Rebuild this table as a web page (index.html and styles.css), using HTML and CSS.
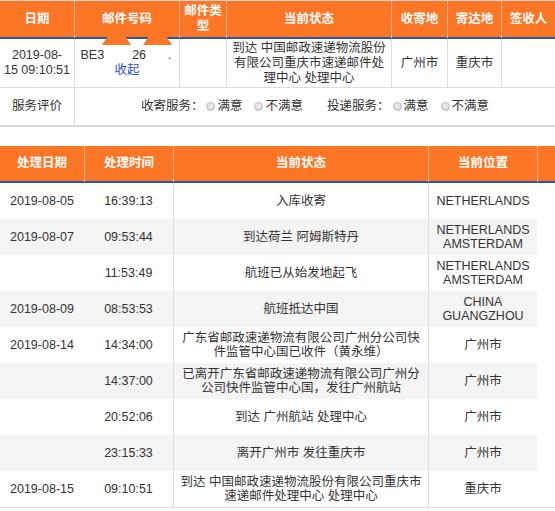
FILE: index.html
```html
<!DOCTYPE html>
<html lang="zh-CN">
<head>
<meta charset="utf-8">
<title>邮件跟踪</title>
<link rel="stylesheet" href="styles.css">
</head>
<body>
<div class="page">
  <div class="t1">
    <div class="row head">
      <div class="h first">日期</div>
      <div class="h">邮件号码</div>
      <div class="h">邮件类<br>型</div>
      <div class="h">当前状态</div>
      <div class="h">收寄地</div>
      <div class="h">寄达地</div>
      <div class="h">签收人</div>
    </div>
    <div class="row data">
      <div class="c first">2019-08-<br>15 09:10:51</div>
      <div class="c trk">
        <div class="num"><span>BE3</span><span class="n2">26</span><span class="n3">.</span></div>
        <a class="fold">收起</a>
      </div>
      <div class="c"></div>
      <div class="c">到达 中国邮政速递物流股份<br>有限公司重庆市速递邮件处<br>理中心 处理中心</div>
      <div class="c">广州市</div>
      <div class="c">重庆市</div>
      <div class="c"></div>
    </div>
    <div class="row svc-row">
      <div class="c first">服务评价</div>
      <div class="c svc">
        <span>收寄服务：</span><span class="radio"></span><span>满意</span><span class="radio gap"></span><span>不满意</span>
        <span class="sep">投递服务：</span><span class="radio"></span><span>满意</span><span class="radio gap"></span><span>不满意</span>
      </div>
    </div>
    <span class="tab tab1"></span>
    <span class="tab tab2"></span>
  </div>

  <div class="t2">
    <div class="row2 head2">
      <div class="h first">处理日期</div>
      <div class="h">处理时间</div>
      <div class="h">当前状态</div>
      <div class="h">当前位置</div>
      <div class="h"></div>
    </div>
    <div class="rows">
      <div class="row2"><div class="d">2019-08-05</div><div class="d">16:39:13</div><div class="d st">入库收寄</div><div class="d loc">NETHERLANDS</div><div class="d blank"></div></div>
      <div class="row2"><div class="d">2019-08-07</div><div class="d">09:53:44</div><div class="d st">到达荷兰 阿姆斯特丹</div><div class="d loc">NETHERLANDS<br>AMSTERDAM</div><div class="d blank"></div></div>
      <div class="row2"><div class="d"></div><div class="d">11:53:49</div><div class="d st">航班已从始发地起飞</div><div class="d loc">NETHERLANDS<br>AMSTERDAM</div><div class="d blank"></div></div>
      <div class="row2"><div class="d">2019-08-09</div><div class="d">08:53:53</div><div class="d st">航班抵达中国</div><div class="d loc">CHINA<br>GUANGZHOU</div><div class="d blank"></div></div>
      <div class="row2"><div class="d">2019-08-14</div><div class="d">14:34:00</div><div class="d st">广东省邮政速递物流有限公司广州分公司快<br>件监管中心国已收件（黄永维）</div><div class="d loc">广州市</div><div class="d blank"></div></div>
      <div class="row2"><div class="d"></div><div class="d">14:37:00</div><div class="d st">已离开广东省邮政速递物流有限公司广州分<br>公司快件监管中心国，发往广州航站</div><div class="d loc">广州市</div><div class="d blank"></div></div>
      <div class="row2"><div class="d"></div><div class="d">20:52:06</div><div class="d st">到达 广州航站 处理中心</div><div class="d loc">广州市</div><div class="d blank"></div></div>
      <div class="row2"><div class="d"></div><div class="d">23:15:33</div><div class="d st">离开广州市 发往重庆市</div><div class="d loc">广州市</div><div class="d blank"></div></div>
      <div class="row2"><div class="d">2019-08-15</div><div class="d">09:10:51</div><div class="d st">到达 中国邮政速递物流股份有限公司重庆市<br>速递邮件处理中心 处理中心</div><div class="d loc">重庆市</div><div class="d blank"></div></div>
    </div>
  </div>
</div>
</body>
</html>
```

FILE: styles.css
```css
* { box-sizing: border-box; }
html, body {
  margin: 0;
  padding: 0;
  overflow: hidden;
  background: #fff;
}
body {
  font-family: "Liberation Sans", "Noto Sans CJK SC", sans-serif;
  font-size: 12.5px;
  color: #333;
}

/* ---------- top table ---------- */
.t1 {
  position: relative;
  width: 555px;
  border-top: 1px solid #cfcfcf;
}
.t1 .row {
  display: grid;
  grid-template-columns: 74px 105px 47px 165px 56px 54px 54px;
}
.h {
  background: #fd7625;
  color: #fff;
  font-weight: bold;
  display: flex;
  align-items: center;
  justify-content: center;
  text-align: center;
  line-height: 15px;
  border-left: 1px solid #f9b68c;
}
.h.first { border-left: none; }
.t1 .head { height: 38px; }
.t1 .head .h { border-bottom: 2px solid #245ba0; }

.c {
  display: flex;
  align-items: center;
  justify-content: center;
  text-align: center;
  line-height: 15px;
  padding: 0 2px;
  border-left: 1px solid #dcdcdc;
  border-bottom: 1px solid #dcdcdc;
}
.c.first { border-left: none; }
.t1 .data { height: 49px; }

.trk {
  flex-direction: column;
  padding: 0;
}
.num {
  width: 93px;
  display: flex;
  text-align: left;
  white-space: nowrap;
}
.n2 { margin-left: 28px; }
.n3 { margin-left: 22px; }
.fold {
  color: #2b4fcf;
  cursor: pointer;
}

.t1 .svc-row {
  grid-template-columns: 74px 481px;
  height: 39px;
}
.t1 .svc-row .c { border-bottom: 2px solid #d8d8d8; }
.svc { white-space: nowrap; }
.radio {
  display: inline-block;
  width: 9px;
  height: 9px;
  margin: 0 2px 0 3px;
  border-radius: 50%;
  border: 1px solid #bcbcbc;
  background: radial-gradient(circle at 50% 40%, #f2f2f2, #cdcdcd);
}
.radio.gap { margin-left: 12px; }
.sep { margin-left: 24px; }

.tab {
  position: absolute;
  top: 36px;
  width: 29px;
  height: 8px;
  background: #fd7625;
  clip-path: polygon(18% 0, 82% 0, 100% 100%, 0 100%);
}
.tab1 { left: 102px; }
.tab2 { left: 143px; }

/* ---------- bottom table ---------- */
.t2 {
  width: 555px;
  margin-top: 19px;
}
.row2 {
  display: grid;
  grid-template-columns: 84px 89px 255px 109px 18px;
  height: 36px;
}
.head2 { height: 37px; }
.head2 .h { border-bottom: 2px solid #245ba0; }

.d {
  display: flex;
  align-items: center;
  justify-content: center;
  text-align: center;
  line-height: 14px;
  padding: 0 4px;
  white-space: nowrap;
}
.rows .row2:nth-child(even) .d { background: #f4f4f4; }
.rows .row2 .d.blank { background: #fff; }
.d.st, .d.loc { border-left: 1px solid #dcdcdc; }
.rows .row2:last-child { height: 37px; }
.rows .row2:last-child .d { border-bottom: 1px solid #dcdcdc; }
```
